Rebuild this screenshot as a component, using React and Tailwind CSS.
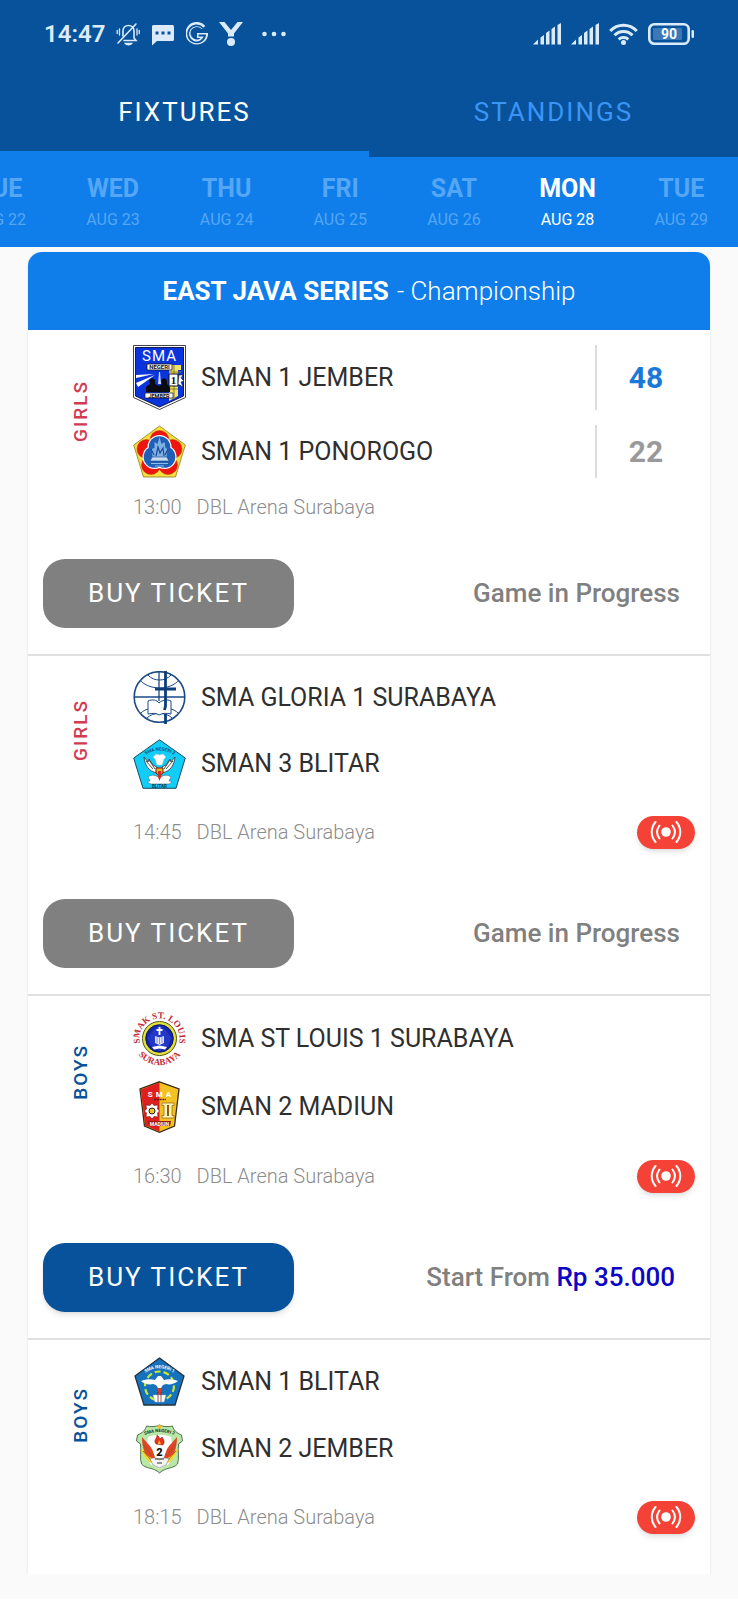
import React from 'react';

const DAYS = [
  { day: 'TUE', date: 'AUG 22' },
  { day: 'WED', date: 'AUG 23' },
  { day: 'THU', date: 'AUG 24' },
  { day: 'FRI', date: 'AUG 25' },
  { day: 'SAT', date: 'AUG 26' },
  { day: 'MON', date: 'AUG 28', active: true },
  { day: 'TUE', date: 'AUG 29' },
];

const GAMES = [
  {
    group: 'GIRLS',
    time: '13:00',
    status: 'progress',
    teams: [
      { name: 'SMAN 1 JEMBER', crest: JemberOneCrest, score: 48, winner: true },
      { name: 'SMAN 1 PONOROGO', crest: PonorogoCrest, score: 22 },
    ],
  },
  {
    group: 'GIRLS',
    time: '14:45',
    live: true,
    status: 'progress',
    teams: [
      { name: 'SMA GLORIA 1 SURABAYA', crest: GloriaCrest },
      { name: 'SMAN 3 BLITAR', crest: BlitarThreeCrest },
    ],
  },
  {
    group: 'BOYS',
    time: '16:30',
    live: true,
    status: 'sale',
    price: 'Rp 35.000',
    teams: [
      { name: 'SMA ST LOUIS 1 SURABAYA', crest: StLouisCrest },
      { name: 'SMAN 2 MADIUN', crest: MadiunCrest },
    ],
  },
  {
    group: 'BOYS',
    time: '18:15',
    live: true,
    teams: [
      { name: 'SMAN 1 BLITAR', crest: BlitarOneCrest },
      { name: 'SMAN 2 JEMBER', crest: JemberTwoCrest },
    ],
  },
];

/* School crests */

function JemberOneCrest() {
  return (
    <svg width="53" height="65" viewBox="0 0 53 65" aria-hidden="true">
      <path d="M.5.5h52v52l-26 12-26-12z" fill="#fff" stroke="#444" />
      <path d="M2.500 2.500h48v48.500l-24 11-24-11z" fill="#0b35dc" stroke="#111a55" />
      <path d="M36 20h12v5h-3v26l-9 5z" fill="#f0e36a" />
      <path d="M36 27h12M36 44h9M41 20v34" stroke="#8a7d20" strokeWidth="1" />
      <text x="26.500" y="16" textAnchor="middle" fontSize="15" letterSpacing="1" fill="#fff" fontFamily="Roboto, sans-serif">SMA</text>
      <path d="M14 19h25v6H14z" fill="#fff" stroke="#111" strokeWidth=".8" />
      <text x="26.500" y="24.300" textAnchor="middle" fontSize="6" fontWeight="700" fill="#111" fontFamily="Roboto, sans-serif">NEGERI</text>
      <path d="M3 30l18-1-18 4zM3 38l19-8L5 42z" fill="#fff" />
      <path d="M26 27l1 0 1 12h-3z" fill="#cfd8ff" />
      <path d="M13 47v-5l4-3-1-4 3-2 3 2v4l4 2 3-2-1-4 3-2 3 2v4l3 3v5z" fill="#0a0a12" />
      <path d="M36 29h9v12h-9z" fill="#fff" stroke="#111" />
      <text x="40.500" y="39" textAnchor="middle" fontSize="11" fontWeight="700" fill="#111" fontFamily="Liberation Serif, serif">1</text>
      <path d="M46 30h4l-2 3 3 3-3 1 2 5-5-3z" fill="#fff" stroke="#222" strokeWidth=".6" />
      <path d="M12 48h28v5H12z" fill="#fff" stroke="#111" strokeWidth=".7" />
      <text x="26" y="52.600" textAnchor="middle" fontSize="5.500" fontWeight="700" fill="#111" fontFamily="Roboto, sans-serif">JEMBER</text>
    </svg>
  );
}

function PonorogoCrest() {
  return (
    <svg width="53" height="53" viewBox="0 0 53 53" aria-hidden="true">
      <path d="M26.500 1L52.300 20 42.500 52h-32L.7 20z" fill="#f6df3e" stroke="#8c7c1c" strokeWidth=".8" />
      <g fill="#ee1410" stroke="#b33a08" strokeWidth=".5">
        <circle cx="26.500" cy="15" r="9.500" />
        <circle cx="39.500" cy="24" r="9.500" />
        <circle cx="35" cy="40" r="9.500" />
        <circle cx="18" cy="40" r="9.500" />
        <circle cx="13.500" cy="24" r="9.500" />
      </g>
      <g fill="#fff">
        <circle cx="26.500" cy="22" r="12" />
        <circle cx="31.500" cy="32" r="12" />
        <circle cx="21.500" cy="32" r="12" />
      </g>
      <g fill="#1f5fb8">
        <circle cx="26.500" cy="22" r="10.800" />
        <circle cx="31.500" cy="32" r="10.800" />
        <circle cx="21.500" cy="32" r="10.800" />
      </g>
      <path d="M26.500 12l2 7 3-2 1 6 2 1-1 8h-14l-1-8 3-1v-6l3 2z" fill="#7fb0e4" />
      <path d="M23 31l2-9 2 6 3-5 1 8M18 24l3 6M35 24l-3 6" stroke="#1b4c98" strokeWidth="1.200" fill="none" />
      <path d="M19 32h15l2 4H17z" fill="#c5dcf4" stroke="#174587" strokeWidth=".6" />
      <path d="M18 38.500h17M22 41h9" stroke="#8fbbe8" strokeWidth="1" />
    </svg>
  );
}

function GloriaCrest() {
  return (
    <svg width="53" height="53" viewBox="0 0 53 53" fill="none" stroke="#1c4a86" aria-hidden="true">
      <circle cx="26.500" cy="26" r="25.300" strokeWidth="1.600" />
      <path d="M1 26h51M26 1v29" strokeWidth="1.300" />
      <path d="M7 9c4 5 12 8 19.500 8S42 14 46 9M15 4c3 3.500 7 5 11.500 5S35 7.500 38 4M14 47c3-3 7-4.500 12.500-4.500S36 44 39 47M8 42c2-2 4-3 7-4M45 42c-2-2-4-3-7-4" />
      <path d="M26 32c-2-3-7-4-11-2v13c4-1 9-1 11 1 3-2 8-2 12-1V30c-4-2-9-1-12 2z" fill="#fff" strokeWidth="1" />
      <path d="M32.500 0v35l-1 4M32.500 43v10M22 18h21" stroke="#0e3d7c" strokeWidth="2.800" />
    </svg>
  );
}

function BlitarThreeCrest() {
  return (
    <svg width="53" height="50" viewBox="0 0 53 50" aria-hidden="true">
      <path d="M26.500.8L52.300 19 43 49.300H10L.7 19z" fill="#10cdfa" stroke="#1b4a5c" />
      <path id="blitar-three-arc" d="M11 17Q26.500 6 43 17" fill="none" />
      <text fontSize="4.500" fontWeight="500" fill="#0d3a4a" fontFamily="Roboto, sans-serif">
        <textPath href="#blitar-three-arc" startOffset="50%" textAnchor="middle">SMA NEGERI 3</textPath>
      </text>
      <path d="M20 18l3-3 3.500 1 3.500-1 3 3-2 2-2 6h-5l-2-6z" fill="#fff" stroke="#bbb" strokeWidth=".4" />
      <path d="M24 34C15 32 12 26 11 18l4 5 1-3 4 6 4 2zM29 34c9-2 12-8 13-16l-4 5-1-3-4 6-4 2z" fill="#fff" stroke="#333" strokeWidth=".8" />
      <path d="M13 22l7 8M16 21l6 9M40 22l-7 8M37 21l-6 9" stroke="#444" strokeWidth=".9" />
      <path d="M23 29h7v5l-3.500 3-3.500-3z" fill="#f0b323" stroke="#6b1c0c" />
      <path d="M15 38c4-3 8-2 11.500 1 3.500-3 7.500-4 11.500-1l-2 4c3 0 3 2 0 3H18c-4-1-4-3-1-3z" fill="#fff" stroke="#4a6a74" strokeWidth=".6" />
      <path d="M24.800 32h3.500v5l-1.800 5-1.700-5z" fill="#d62a1e" />
      <text x="26.500" y="48.700" textAnchor="middle" fontSize="4.500" fontWeight="700" fill="#0d3a4a" fontFamily="Roboto, sans-serif">BLITAR</text>
    </svg>
  );
}

function StLouisCrest() {
  return (
    <svg width="53" height="55" viewBox="0 0 53 55" aria-hidden="true">
      <path id="louis-top" d="M9.200 37.500A20 20 0 1 1 43.800 37.500" fill="none" />
      <path id="louis-bottom" d="M.8 34A26.500 26.500 0 0 0 52.200 34" fill="none" />
      <g fontSize="9" fontWeight="700" fill="#c42a35" fontFamily="Liberation Serif, serif">
        <text>
          <textPath href="#louis-top" startOffset="50%" textAnchor="middle">SMAK ST. LOUIS</textPath>
        </text>
        <text>
          <textPath href="#louis-bottom" startOffset="50%" textAnchor="middle">SURABAYA</textPath>
        </text>
      </g>
      <circle cx="26.500" cy="27.500" r="17" fill="#e3e23a" stroke="#55551a" />
      <circle cx="26.500" cy="27.500" r="13.800" fill="#1626a8" stroke="#0c145e" />
      <path d="M26.500 14l7 6 5 7-4 8-8 5-8-5-4-8 5-7z" fill="#2338c8" />
      <path d="M26.500 16v8M23.500 19h6" stroke="#fff" strokeWidth="1.800" />
      <path d="M22 25l4.500 1.500L31 25v7l-4.500 2-4.500-2z" fill="#dfe3fb" />
      <path d="M24 26v6M26.500 27v6M29 26v6" stroke="#6270c8" strokeWidth=".7" />
      <path d="M19 36l7.500-1.500L34 36l-2 2.500-5.500-1-5.500 1z" fill="#fff" />
    </svg>
  );
}

function MadiunCrest() {
  return (
    <svg width="53" height="52" viewBox="0 0 53 52" aria-hidden="true">
      <path d="M26.500.8L46 8l-4.500 37-15 6.300L11.500 45 7 8z" fill="#f2c122" stroke="#3c2a14" strokeWidth="1.300" />
      <path d="M26.500 1.500L7.800 8.400 12.200 44.500l14.300 6z" fill="#dd1f1f" />
      <text x="28" y="15.500" textAnchor="middle" fontSize="8" fontWeight="700" letterSpacing="3" fill="#fff" fontFamily="Roboto, sans-serif">SMA</text>
      <path d="M21 18.500h12" stroke="#5a1a10" strokeWidth="1.500" strokeDasharray="2 .8" />
      <path d="M19 22l2 2.500 4-.5-.5 4 2 2-2 2 .5 4-4-.5-2 2.500-2-2.500-4 .5.500-4-2-2 2-2-.5-4 4 .5z" fill="#fff" stroke="#7c1010" strokeWidth=".6" />
      <circle cx="19" cy="30" r="3" fill="#f2c122" stroke="#222" />
      <path d="M29 22h12v2.500h-2v10h2V37H29v-2.500h2v-10h-2z" fill="#fff3b8" stroke="#8a5c10" strokeWidth=".7" />
      <path d="M35 24v11" stroke="#8a5c10" strokeWidth="2" />
      <path d="M15 40h23l-1 5H16z" fill="#9e1b14" />
      <text x="26.500" y="44.500" textAnchor="middle" fontSize="5" fontWeight="700" fill="#fff" fontFamily="Roboto, sans-serif">MADIUN</text>
    </svg>
  );
}

function BlitarOneCrest() {
  return (
    <svg width="53" height="53" viewBox="0 0 53 53" aria-hidden="true">
      <path d="M26.500 3L51 21 42 50H11L2 21z" fill="#1672bd" stroke="#25323c" strokeWidth="1.300" />
      <path id="blitar-one-arc" d="M10 19.500Q26.500 7 43 19.500" fill="none" />
      <text fontSize="4.500" fontWeight="700" fill="#fff" fontFamily="Roboto, sans-serif">
        <textPath href="#blitar-one-arc" startOffset="50%" textAnchor="middle">SMA NEGERI 1</textPath>
      </text>
      <circle cx="26.500" cy="31" r="14.500" fill="none" stroke="#c8e838" strokeWidth="2.200" strokeDasharray="6 3" />
      <path d="M8 26c5-2 10-2 14-1l3-4h3l3 4c4-1 9-1 14 1-4 3-8 4-12 3l-3 1-2 3h-3l-2-3-3-1c-4 1-9 0-12-3z" fill="#fff" />
      <path d="M26.500 33v8" stroke="#d2402c" strokeWidth="3.500" />
      <path d="M20 40h13l-2 7h-9z" fill="#fff" stroke="#9db4c6" strokeWidth=".5" />
      <path d="M25 37v10M28 37v10" stroke="#7a2b22" strokeWidth=".8" />
    </svg>
  );
}

function JemberTwoCrest() {
  return (
    <svg width="53" height="51" viewBox="0 0 53 51" aria-hidden="true">
      <path d="M26.500 2c4 2 9 2 13 1 1 4 4 7 9 9l1 6-4 3c-1 8 1 14-1 20-4 5-12 3-18 9-6-6-14-4-18-9-2-6 0-12-1-20l-4-3 1-6c5-2 8-5 9-9 4 1 9 1 13-1z" fill="#b8e8a8" stroke="#53704c" />
      <path id="jember-two-arc" d="M12 12Q26.500 6 41 12" fill="none" />
      <text fontSize="4.500" fontWeight="700" fill="#16321a" fontFamily="Roboto, sans-serif">
        <textPath href="#jember-two-arc" startOffset="50%" textAnchor="middle">SMA NEGERI 2</textPath>
      </text>
      <path d="M26.500.5l1 2h2l-1.500 1.500.5 2-2-1-2 1 .5-2L23.500 2.500h2z" fill="#f0c02a" />
      <path d="M15 14c7-3 16-3 23 0l2 14-4 13-9.500 5L17 41l-4-13z" fill="#fff" />
      <path d="M9 14c3 4 7 7 10 12l3 8-2 6C12 34 9 25 9 14zM44 14c-3 4-7 7-10 12l-3 8 2 6c8-6 11-15 11-26z" fill="#e0452a" />
      <path d="M8 23c1 8 4 13 10 17l2-4c-6-3-10-7-12-13zM45 23c-1 8-4 13-10 17l-2-4c6-3 10-7 12-13z" fill="#f7d728" />
      <path d="M10 21l9 12M10 28l8 9M43 21l-9 12M43 28l-8 9" stroke="#a2580f" strokeWidth=".9" />
      <path d="M23 21c-3-4 1-5 1-9 3 2 2 3 3 4l2-2c2 3 3 5 1 8z" fill="#e8301c" stroke="#7e1c10" strokeWidth=".5" />
      <path d="M25 21l1-4 2 4z" fill="#f9ca24" />
      <text x="26.500" y="33" textAnchor="middle" fontSize="11" fontWeight="900" fill="#111" fontFamily="Roboto, sans-serif">2</text>
      <path d="M17 36c4-2 7-1 9.500 1 2.500-2 5.500-3 9.500-1l-3 6-6.500 3-6.500-3z" fill="#f4f4f4" stroke="#777" strokeWidth=".6" />
      <path d="M22 36h9M24 40h5" stroke="#333" strokeWidth="1.200" />
    </svg>
  );
}

/* Status bar icons */

function BellOffIcon() {
  return (
    <svg width="24" height="24" viewBox="0 0 24 24" fill="none" stroke="currentColor" strokeWidth="1.600" strokeLinecap="round" aria-hidden="true">
      <path d="M8 18.500h12l-2-2.500V9c0-3-2-5.500-5.500-5.500S7 6 7 9v5" />
      <path d="M2 21L20 2" />
      <path d="M9.500 21.500h6c-1 1.500-5 1.500-6 0z" fill="currentColor" />
      <path d="M3.500 7v6M1.200 8.500v3M21 7v6M23.200 8.500v3" strokeWidth="1.300" />
    </svg>
  );
}

function ChatIcon() {
  return (
    <svg width="24" height="24" viewBox="0 0 24 24" aria-hidden="true">
      <path d="M2.500 3h19A1.500 1.500 0 0 1 23 4.500v13a1.500 1.500 0 0 1-1.500 1.500H6l-5 4.500v-19A1.500 1.500 0 0 1 2.500 3z" fill="currentColor" />
      <path d="M4.500 9.500h3v3h-3zM10.500 9.500h3v3h-3zM16.500 9.500h3v3h-3z" fill="#07529b" />
    </svg>
  );
}

function GoogleIcon() {
  return (
    <svg width="22" height="24" viewBox="0 0 22 24" fill="none" aria-hidden="true">
      <path d="M17.500 5.500A8.800 8.800 0 1 0 19.300 13.500H11" stroke="currentColor" strokeWidth="5" />
      <path d="M16.800 6A8.500 8.500 0 1 0 19 13.500h-6.500" stroke="#07529b" strokeWidth="1.800" />
    </svg>
  );
}

function MedalIcon() {
  return (
    <svg width="24" height="24" viewBox="0 0 24 24" fill="currentColor" aria-hidden="true">
      <path d="M0 0h5.500l6.500 8L18.500 0H24l-9 11.500v3H9v-3z" />
      <circle cx="12" cy="20" r="4" />
    </svg>
  );
}

function SignalIcon() {
  return (
    <svg width="28" height="22" viewBox="0 0 28 22" fill="currentColor" aria-hidden="true">
      <path d="M0 21.500l5-5v5zM7.500 14.500l3.500-2.500v9.500H7.500zM13 10l3.500-2.500v14H13zM18.500 6L22 3.500v18h-3.500zM24.500 2L28 0v21.500h-3.500z" />
    </svg>
  );
}

function WifiIcon() {
  return (
    <svg width="29" height="22" viewBox="0 0 29 22" fill="none" stroke="currentColor" strokeWidth="3" aria-hidden="true">
      <path d="M1.200 8a18.500 18.500 0 0 1 26.600 0M5.500 12.300a12.500 12.500 0 0 1 18 0M9.700 16.300a7 7 0 0 1 9.600 0" />
      <circle cx="14.500" cy="19.500" r="2.500" fill="currentColor" stroke="none" />
    </svg>
  );
}

function BatteryIcon() {
  return (
    <svg width="46" height="22" viewBox="0 0 46 22" aria-hidden="true">
      <rect x="1.300" y="1.300" width="39.400" height="19.400" rx="5" fill="none" stroke="currentColor" strokeWidth="2.600" />
      <rect x="5" y="5" width="29" height="12" rx="1" fill="#3a78b8" />
      <rect x="43.500" y="7" width="2.500" height="8" rx="1.200" fill="currentColor" />
      <text x="21" y="16" textAnchor="middle" fontSize="14" fontWeight="700" fill="#fff" fontFamily="Roboto, sans-serif">90</text>
    </svg>
  );
}

function StatusBar() {
  return (
    <div className="flex h-[68px] items-center justify-between px-11 text-[#dcebfc]">
      <div className="flex items-center gap-[11px]">
        <span className="text-2xl font-semibold">14:47</span>
        <BellOffIcon />
        <ChatIcon />
        <GoogleIcon />
        <MedalIcon />
        <svg className="ml-2" width="24" height="6" viewBox="0 0 24 6" fill="currentColor" aria-hidden="true">
          <circle cx="2.500" cy="3" r="2.300" />
          <circle cx="12" cy="3" r="2.300" />
          <circle cx="21.500" cy="3" r="2.300" />
        </svg>
      </div>
      <div className="flex items-center gap-[10px]">
        <SignalIcon />
        <SignalIcon />
        <WifiIcon />
        <BatteryIcon />
      </div>
    </div>
  );
}

function LiveBadge() {
  return (
    <button
      type="button"
      aria-label="Live"
      className="flex h-[33px] w-[58px] items-center justify-center rounded-full bg-[#f44336] shadow-md"
    >
      <svg width="32" height="22" viewBox="0 0 32 22" fill="none" stroke="#fff" strokeWidth="2" strokeLinecap="round" aria-hidden="true">
        <circle cx="16" cy="11" r="4.800" fill="#fff" stroke="none" />
        <path d="M9.500 4.500c-3 4-3 9 0 13M22.500 4.500c3 4 3 9 0 13M5.500 1c-5 6-5 14 0 20M26.500 1c5 6 5 14 0 20" />
      </svg>
    </button>
  );
}

function Game({ game }) {
  const { group, time, live, status, price, teams } = game;

  return (
    <article className="border-b-2 border-[#e0e0e0] px-[15px] pt-[15px] pb-[26px] last:border-b-0 last:pb-[30px]">
      <div className="flex">
        <div className="flex w-[90px] items-center justify-center pr-[15px]">
          <span
            className={`rotate-180 text-[19px] leading-6 font-medium tracking-[2px] [writing-mode:vertical-rl] ${
              group === 'GIRLS' ? 'text-[#d33a52]' : 'text-[#07529b]'
            }`}
          >
            {group}
          </span>
        </div>
        <div className="flex flex-1 flex-col gap-[15px]">
          {teams.map((team) => {
            const Crest = team.crest;

            return (
              <div key={team.name} className="flex items-center gap-[15px]">
                <Crest />
                <h3 className="flex-1 text-[25px] leading-8 text-[#2f2f2f]">{team.name}</h3>
                {team.score !== undefined && (
                  <div
                    className={`flex w-[100px] items-center justify-center self-stretch border-l-2 border-[#dcdcdc] text-[30px] font-bold ${
                      team.winner ? 'text-[#1a79d8]' : 'text-[#999999]'
                    }`}
                  >
                    {team.score}
                  </div>
                )}
              </div>
            );
          })}
        </div>
      </div>

      <div className={`mt-4 ml-[90px] flex items-center justify-between ${live ? 'h-[54px]' : 'h-[25px]'}`}>
        <p className="flex gap-[15px] text-xl font-light text-[#8c8c8c]">
          <span>{time}</span>
          <span>DBL Arena Surabaya</span>
        </p>
        {live && <LiveBadge />}
      </div>

      {status && (
        <div className="mt-10 flex items-center justify-between">
          <button
            type="button"
            disabled={status === 'progress'}
            className="h-[69px] w-[251px] rounded-[22px] bg-[#07529b] text-[26px] tracking-[2px] text-white shadow-md disabled:bg-[#808080] disabled:shadow-none"
          >
            BUY TICKET
          </button>
          <p className={`text-[26px] font-medium text-[#808080] ${price ? 'pr-5' : 'pr-[15px]'}`}>
            {status === 'progress' ? 'Game in Progress' : 'Start From '}
            {price && <span className="text-[#0c06c4]">{price}</span>}
          </p>
        </div>
      )}
    </article>
  );
}

export default function App() {
  return (
    <div className="bg-[#fafafa] font-['Roboto',sans-serif]">
      <header className="bg-[#07529b]">
        <StatusBar />
        <nav className="flex h-[89px] text-[26px] tracking-[2px]">
          <button type="button" className="flex-1 border-b-[6px] border-[#0f7eea] pt-[6px] text-white">
            FIXTURES
          </button>
          <button type="button" className="flex-1 border-b-[6px] border-transparent pt-[6px] text-[#3a95f5]">
            STANDINGS
          </button>
        </nav>
      </header>

      {/* Day picker, scrolled so that the oldest day is cut off */}
      <div className="flex justify-end overflow-hidden bg-[#0f7eea]">
        {DAYS.map(({ day, date, active }) => (
          <button
            key={date}
            type="button"
            className={`w-[15.4%] shrink-0 pt-4 pb-3 ${active ? 'text-white' : 'text-[#55a7f5]'}`}
          >
            <span className="block text-[25px] leading-8 font-bold">{day}</span>
            <span className="block text-base leading-[30px]">{date}</span>
          </button>
        ))}
      </div>

      <main className="mx-7 mt-[5px] overflow-hidden rounded-t-[14px] bg-white shadow">
        <h2 className="flex h-[78px] items-center justify-center gap-2 bg-[#0f7eea] text-[26px] text-white">
          <span className="font-bold">EAST JAVA SERIES</span>
          <span className="font-light">- Championship</span>
        </h2>
        {GAMES.map((game) => (
          <Game key={game.time} game={game} />
        ))}
      </main>
      <div className="relative h-[25px] bg-[#fafafa]" />
    </div>
  );
}
